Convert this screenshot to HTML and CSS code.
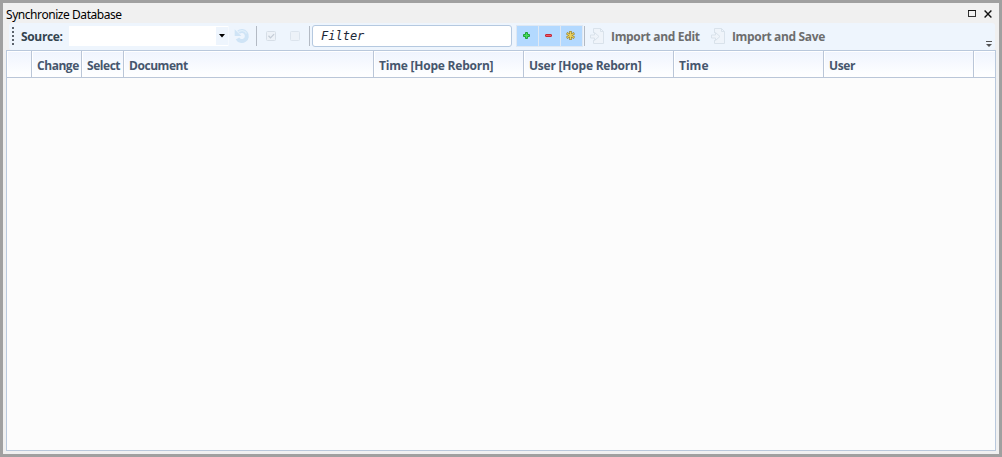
FILE: index.html
```html
<!DOCTYPE html>
<html lang="en">
<head>
<meta charset="utf-8">
<title>Synchronize Database</title>
<link rel="stylesheet" href="styles.css">
</head>
<body>
<div class="window">
  <header class="titlebar">
    <span class="title">Synchronize Database</span>
    <svg class="maximize" width="8" height="7" shape-rendering="crispEdges"><path d="M.5.5h7v6h-7z" fill="none" stroke="#333"/><path d="M0 .5h8" stroke="#111"/></svg>
    <svg class="close" width="8" height="8"><path d="M.6.6l6.800 6.800M7.400.6L.6 7.400" stroke="#111" stroke-width="1.400"/></svg>
  </header>
  <div class="toolbar">
    <svg class="grip" width="2" height="18" shape-rendering="crispEdges"><path d="M1 0v18" stroke="#5b636c" stroke-width="2" stroke-dasharray="2 2"/></svg>
    <span class="label source">Source:</span>
    <div class="combo"><span class="drop"><svg width="6" height="4"><path d="M0 0h6L3 3.500z" fill="#000"/></svg></span></div>
    <svg class="refresh" width="16" height="16"><path d="M4.500 4.300A5 5 0 1 1 3.500 10.500" fill="none" stroke="#cfe4f6" stroke-width="4"/><path d="M.7 1.200v6.700h6.700z" fill="#cfe4f6"/><path d="M4 4.500a5 5 0 0 1 8.500 1" fill="none" stroke="#e1effa" stroke-width="1.300"/></svg>
    <i class="separator first"></i>
    <svg class="check" width="10" height="10"><rect x=".5" y=".5" width="9" height="9" rx="1" fill="#edf2f8" stroke="#d6dee7"/><path d="M2.500 4.700l2 2.200 3.600-3.800" fill="none" stroke="#c4ccd6" stroke-width="1.300"/></svg>
    <svg class="uncheck" width="10" height="10"><rect x=".5" y=".5" width="9" height="9" rx="1" fill="#edf2f8" stroke="#dce4ed"/></svg>
    <i class="separator second"></i>
    <div class="filter">Filter</div>
    <div class="toggles">
      <span class="toggle"><svg width="7" height="7"><path d="M2.500.5h2v2h2v2h-2v2h-2v-2h-2v-2h2z" fill="#45df58" stroke="#22a03a"/></svg></span>
      <span class="toggle"><svg width="7" height="7"><rect x=".5" y="2.500" width="6" height="2" rx=".5" fill="#ef5964" stroke="#c22b3b"/></svg></span>
      <span class="toggle"><svg width="9" height="9"><path d="M4.500 0v9M.6 2.200l7.800 4.600M8.400 2.200L.6 6.800" stroke="#a18b34" stroke-width="2.600"/><path d="M4.500.8v7.400M1.200 2.600l6.600 3.800M7.800 2.600L1.200 6.400" stroke="#ecd360" stroke-width="1.100"/></svg></span>
    </div>
    <i class="separator third"></i>
    <svg class="import" width="14" height="16"><path d="M3.500 5V.5h7l3 3v12h-10V12M10.500.5v3h3M.5 7h4V4.500L9 8.500l-4.500 4V10h-4z" fill="#eff4fa" stroke="#d9e2eb"/></svg>
    <span class="label edit">Import and Edit</span>
    <svg class="import" width="14" height="16"><path d="M3.500 5V.5h7l3 3v12h-10V12M10.500.5v3h3M.5 7h4V4.500L9 8.500l-4.500 4V10h-4z" fill="#eff4fa" stroke="#d9e2eb"/></svg>
    <span class="label save">Import and Save</span>
    <svg class="overflow" width="6" height="6"><path d="M0 .5h6" stroke="#555"/><path d="M0 3h6L3 6z" fill="#555"/></svg>
  </div>
  <main class="grid">
    <div class="headings">
      <span></span><span class="change">Change</span><span class="select">Select</span><span class="document">Document</span><span class="remote">Time [Hope Reborn]</span><span class="remote">User [Hope Reborn]</span><span>Time</span><span class="user">User</span><span class="rest"></span>
    </div>
  </main>
</div>
</body>
</html>
```
FILE: styles.css
```css
* { box-sizing: border-box; }
body { margin: 0; font-family: "Open Sans", "Noto Sans", sans-serif; }
svg { display: block; flex: none; }
.window { display: flex; flex-direction: column; width: 1002px; height: 457px; padding: 0 3px 3px; border: 3px solid #a0a0a0; background: #f0f0f0; }
.titlebar { display: flex; flex: none; height: 20px; color: #000; font: 12px/23px "Noto Sans", sans-serif; }
.title { width: 962px; letter-spacing: -.44px; white-space: nowrap; }
.maximize { margin: 7px 8px 0 0; }
.close { margin-top: 7px; }
.toolbar { display: flex; flex: none; height: 27px; margin: 0 1px 0 3px; background: #eef5fd; border-radius: 3px; }
.grip { margin: 4px 7px 0 3px; }
.label { flex: none; font-weight: 700; font-size: 12px; line-height: 27px; color: #6d6d6d; white-space: nowrap; }
.source { width: 48px; color: #34444f; letter-spacing: -.35px; }
.combo { display: flex; justify-content: flex-end; flex: none; width: 160px; height: 20px; margin-top: 3px; background: #fff; border-right: 1px solid #f5f9fe; }
.drop { display: flex; justify-content: center; width: 12px; height: 18px; margin-top: 1px; padding-top: 7px; background: #eef5fd; }
.refresh { margin: 5px 0 0 5px; }
.separator { flex: none; width: 1px; height: 20px; margin-top: 3px; background: #b3bac4; }
.first { margin-left: 6px; }
.check { margin: 8px 0 0 9px; }
.uncheck { margin: 8px 0 0 14px; }
.second { margin-left: 9px; }
.filter { flex: none; width: 200px; height: 22px; margin: 2px 0 0 2px; padding-left: 8px; border: 1px solid #b5c9e0; border-radius: 3px; background: #fff; font: italic 12px/20px "DejaVu Sans Mono", monospace; color: #1c2738; }
.toggles { display: flex; gap: 1px; margin: 2px 0 0 4px; padding: 1px; height: 22px; background: #dfe8f3; }
.toggle { display: flex; justify-content: center; width: 21px; height: 20px; padding-right: 3px; background: #b3d9ff; }
.toggle svg { margin-top: 6px; }
.toggle:last-child svg { margin-top: 5px; }
.third { margin-left: 1px; }
.import { margin: 5px 0 0 5px; }
.edit { width: 95px; margin-left: 7px; letter-spacing: -.33px; }
.save { margin-left: 7px; letter-spacing: -.35px; }
.overflow { margin: 18px 3px 0 auto; }
.grid { flex: 1; border: 1px solid #b9c8dc; background: #fcfcfc; }
.headings { display: grid; grid-template-columns: 25px 50px 42px 250px 150px 150px 150px 150px 1fr; grid-template-rows: 26px; height: 27px; border-bottom: 1px solid #bac6d8; color: #46566d; font-weight: 700; font-size: 12px; line-height: 29px; white-space: nowrap; }
.headings span { padding-left: 5px; border-right: 1px solid #bac6d8; background: linear-gradient(#eff4fe, #fff); box-shadow: inset 1px 1px #fff; }
.headings .change, .headings .select, .headings .document { letter-spacing: -.45px; }
.headings .remote { letter-spacing: -.22px; }
.headings .user { letter-spacing: -.4px; }
.headings .rest { border-right: 0; }
```
